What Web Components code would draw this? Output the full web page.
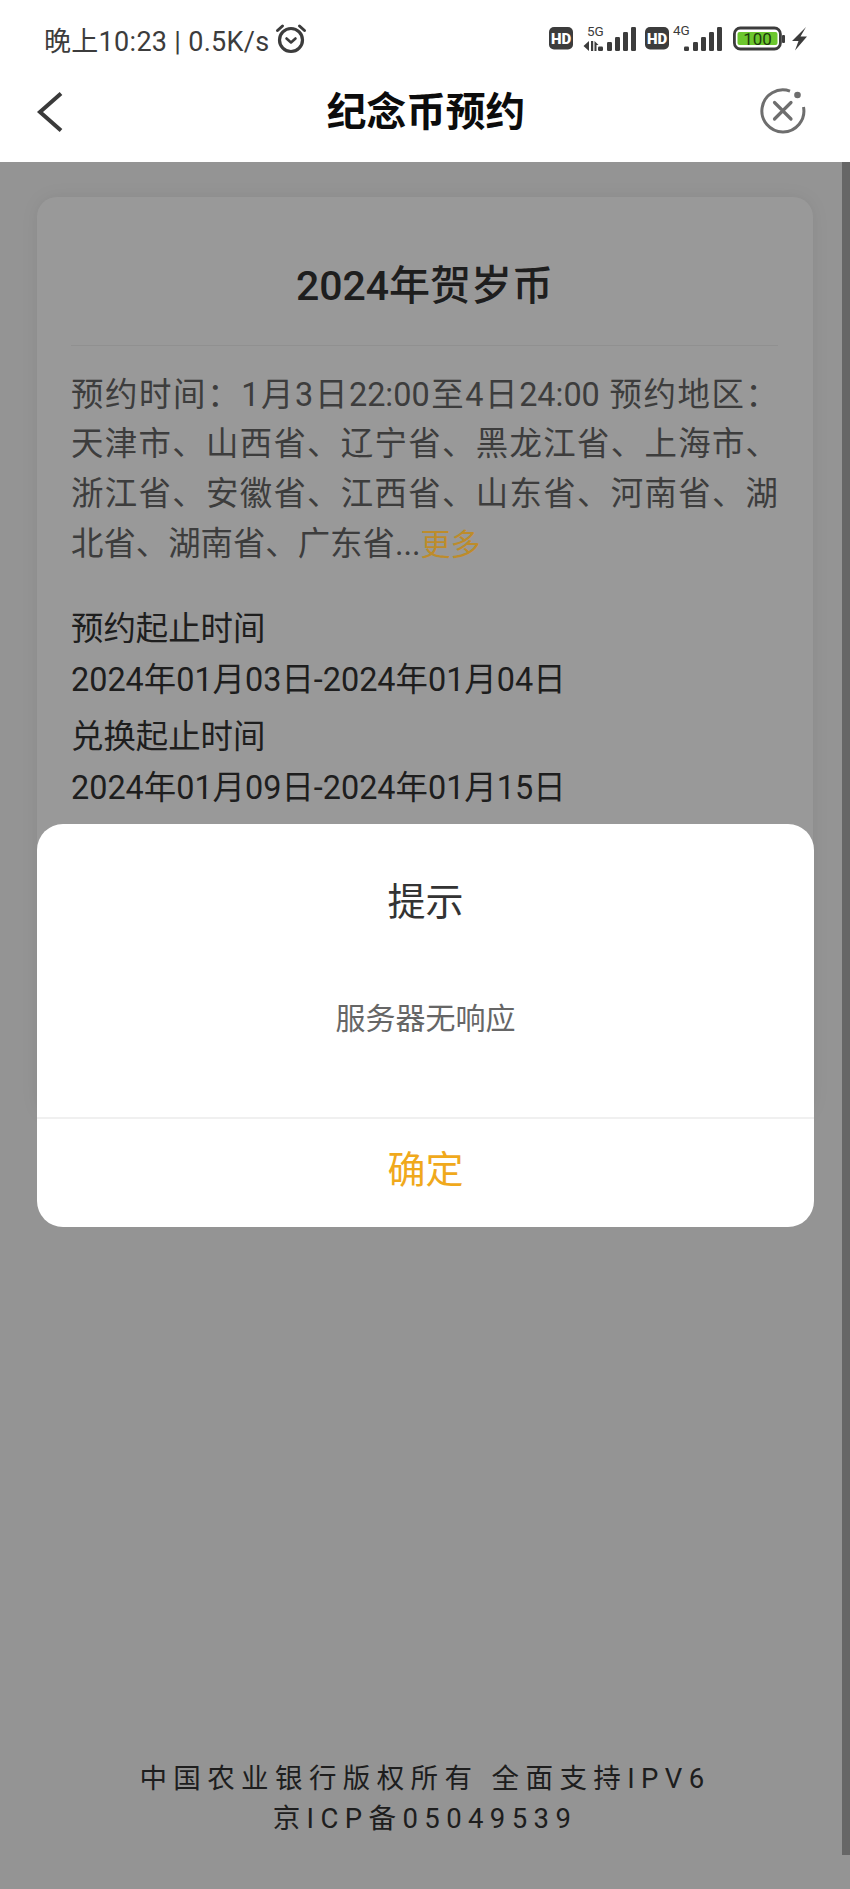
<!DOCTYPE html>
<html lang="zh"><head><meta charset="utf-8">
<style>
html,body{margin:0;padding:0;background:#fff}
body{width:850px;height:1889px;overflow:hidden;font-family:Roboto,"Noto Sans CJK SC",sans-serif}
app-page{display:block}
</style></head><body>
<app-page></app-page>
<script>
const FONT='Roboto,"Noto Sans CJK SC",sans-serif';
function def(name,html){
  customElements.define(name,class extends HTMLElement{
    constructor(){super();this.attachShadow({mode:'open'}).innerHTML=html;}
  });
}
const bars=x=>[0,1,2,3,4].map(i=>{const xs=[0,9,17,25,33][i],ys=[46.5,42,37,32,27][i];return `<rect x="${x+xs}" y="${ys}" width="5" height="${51-ys}" rx="1.200"/>`}).join('');
const hd=x=>`<rect x="${x}" y="27" width="24" height="22.500" rx="5" fill="#3c3c3c"/><text x="${x+12}" y="43.500" text-anchor="middle" font-family="Roboto,sans-serif" font-weight="900" font-size="15" fill="#fff">HD</text>`;
def('status-bar',`<style>
:host{display:flex;height:68px;box-sizing:border-box;padding:0 0 0 44px;align-items:flex-start;background:#fff;position:relative;color:#3c3c3c;font-family:${FONT}}
.l{font-size:27px;display:flex;align-items:center;margin-top:23px;height:32px;letter-spacing:.3px;white-space:nowrap}
.alarm{margin-left:5px;flex:none}
.r{margin-left:auto;margin-top:20px;margin-right:39px}
svg{display:block}
</style>
<div class="l"><span>晚上10:23 | 0.5K/s</span><svg class="alarm" width="32" height="32" viewBox="0 0 32 32" fill="none" stroke="#3c3c3c"><circle cx="16" cy="17" r="11.500" stroke-width="3.200"/><path d="M11.500 15.500l4.500 4 4.500-4" stroke-width="2.600" stroke-linecap="round" stroke-linejoin="round"/><path d="M2.500 7.500 7.500 3M29.500 7.500 24.500 3" stroke-width="3" stroke-linecap="round"/></svg></div>
<div class="r"><svg width="262" height="36" viewBox="549 20 262 36">
${hd(549)}
<text x="587" y="35.500" font-family="Roboto,sans-serif" font-size="13.500" fill="#3c3c3c">5G</text>
<path d="M589 41v10l-5.500-5zM591 41v10h2.200V41zM594.500 41l-.001 10H596.500v-6h2z" fill="#3c3c3c"/>
<g fill="#3c3c3c">${bars(598)}</g>
${hd(645)}
<text x="673" y="35" font-family="Roboto,sans-serif" font-size="13.500" fill="#3c3c3c">4G</text>
<g fill="#3c3c3c">${bars(684)}</g>
<rect x="734.400" y="28" width="46" height="21" rx="6" fill="#fff" stroke="#3c3c3c" stroke-width="2.800"/>
<rect x="737.500" y="32" width="40" height="13" rx="2" fill="#6cc72e"/>
<text x="757.500" y="44.500" text-anchor="middle" font-family="Roboto,sans-serif" font-size="17" fill="#1d3d0c">100</text>
<rect x="782" y="35" width="3" height="8" rx="1" fill="#3c3c3c"/>
<path d="M806 27 792 41h6.500l-3.500 9.500 12-14h-6.500z" fill="#3c3c3c"/>
</svg></div>`);
def('nav-bar',`<style>
:host{display:flex;height:94px;align-items:center;justify-content:space-between;background:#fff;position:relative;font-family:${FONT}}
.t{position:absolute;left:2px;right:0;top:0;height:90px;line-height:90px;text-align:center;font-size:39.700px;font-weight:700;color:#0c0c0c}
svg{display:block;position:relative}
.b{margin-left:36px;margin-top:-6px}
.c{margin-right:44px;margin-top:-8px}
</style>
<svg class="b" width="28" height="42" viewBox="0 0 28 42" fill="none"><path d="M25 2.500 4 21l21 18.500" stroke="#3a3a3a" stroke-width="4"/></svg>
<div class="t">纪念币预约</div>
<svg class="c" width="46" height="46" viewBox="0 0 46 46" fill="none" stroke="#6e6e6e"><path d="M30 3.200A21 21 0 1 0 43.500 19" stroke-width="3"/><circle cx="37.500" cy="7" r="3.300" fill="#6e6e6e" stroke="none"/><path d="M14.500 14.500 31 31M31 14.500 14.500 31" stroke-width="3.200" stroke-linecap="round"/></svg>`);
def('info-card',`<style>
:host{display:block;box-sizing:border-box;margin:35px 37px 0;padding:0 35px 0 34px;height:920px;background:#fff;border-radius:20px;box-shadow:0 0 18px rgba(0,0,0,.07);font-family:${FONT}}
h2{margin:0;height:149px;line-height:179px;box-sizing:border-box;text-align:center;font-size:41px;font-weight:500;color:#333;border-bottom:1px solid #f0f0f0}
.p{margin:0;font-size:32.400px;line-height:49.800px;color:#666;padding-top:24.500px;height:233.500px}
.j{text-align:justify;text-align-last:justify}
.more{color:#bd8c2b;font-size:30px;position:relative;z-index:3}
.row{font-size:32.400px;line-height:50.500px;color:#333;white-space:nowrap}
.g{margin-bottom:7px}
</style>
<h2>2024年贺岁币</h2>
<div class="p"><div class="j">预约时间：1月3日22:00至4日24:00 预约地区：</div><div class="j">天津市、山西省、辽宁省、黑龙江省、上海市、</div><div class="j">浙江省、安徽省、江西省、山东省、河南省、湖</div><div>北省、湖南省、广东省...<span class="more">更多</span></div></div>
<div class="g"><div class="row">预约起止时间</div><div class="row">2024年01月03日-2024年01月04日</div></div>
<div><div class="row">兑换起止时间</div><div class="row">2024年01月09日-2024年01月15日</div></div>`);
def('page-footer',`<style>
:host{display:block;position:absolute;left:0;right:0;top:1759px;text-align:center;font-size:27.500px;line-height:40px;letter-spacing:6.400px;color:#333;font-family:${FONT}}
</style>中国农业银行版权所有 全面支持IPV6<br>京ICP备05049539`);
def('alert-dialog',`<style>
:host{display:block;position:absolute;left:37px;top:824px;width:777px;height:403px;background:#fff;border-radius:26px;overflow:hidden;font-family:${FONT};text-align:center}
.t{height:152px;line-height:157px;font-size:38px;color:#333}
.m{height:141px;line-height:86px;font-size:30px;color:#666}
.ok{border-top:2px solid #f0f0f0;height:108px;line-height:102px;font-size:38px;color:#f0a91c}
</style><div class="t">提示</div><div class="m">服务器无响应</div><div class="ok">确定</div>`);
def('app-page',`<style>
:host{display:block;position:relative;width:850px;height:1889px;overflow:hidden;background:#f7f7f7}
.top{background:#fff;position:relative;z-index:3}
.mask{position:absolute;left:0;right:0;top:162px;bottom:0;background:rgba(0,0,0,.4);z-index:2}
.sb{position:absolute;right:0;top:162px;width:8px;height:1693px;background:#666;z-index:2}
.main{height:1727px;position:relative}
alert-dialog{z-index:4}
</style>
<div class="top"><status-bar></status-bar><nav-bar></nav-bar></div>
<div class="main"><info-card></info-card></div>
<page-footer></page-footer>
<div class="mask"></div><div class="sb"></div>
<alert-dialog></alert-dialog>`);
</script></body></html>
